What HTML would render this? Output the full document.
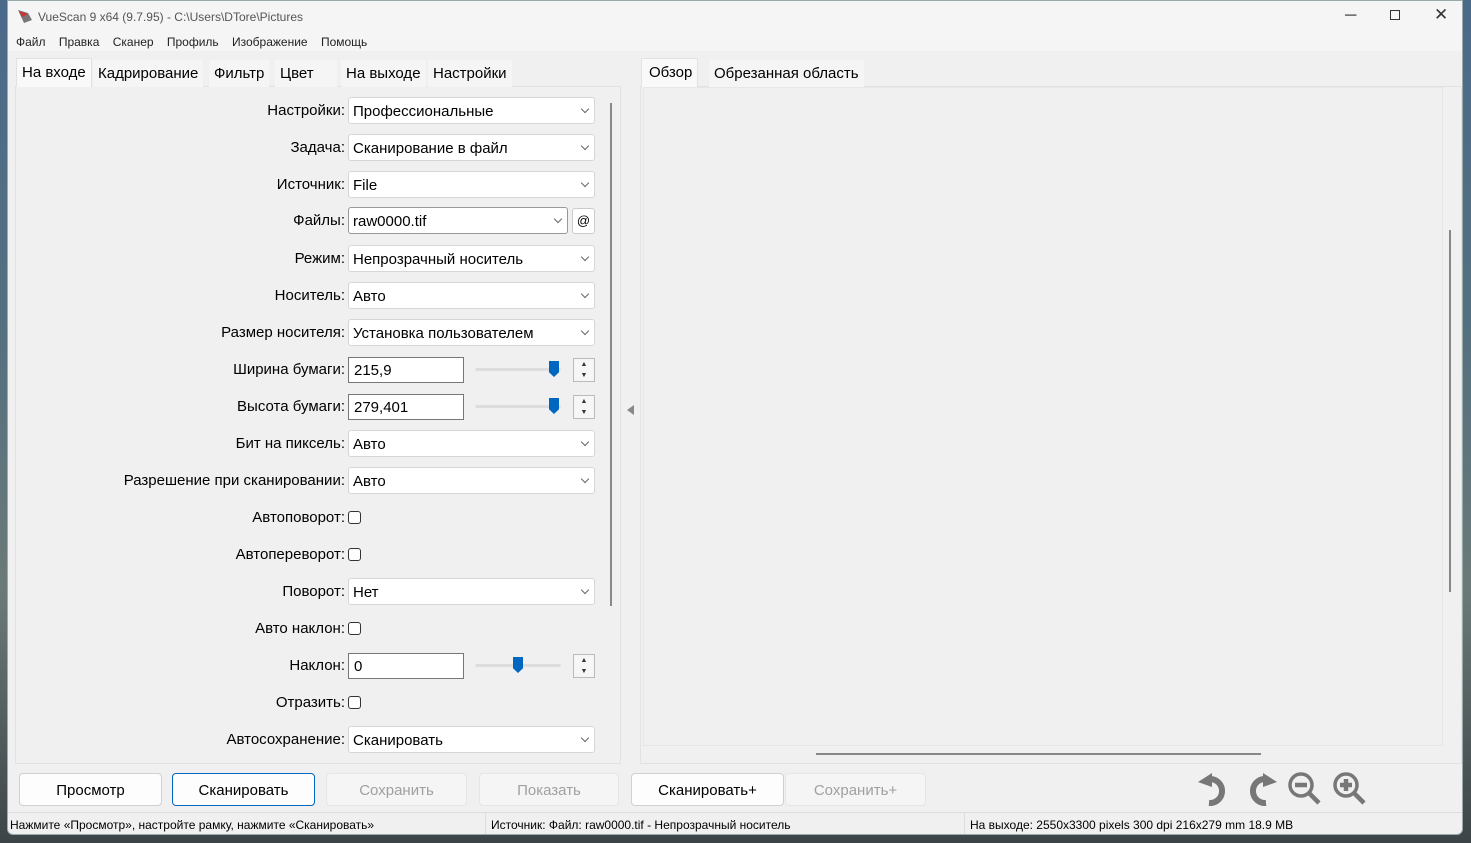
<!DOCTYPE html>
<html><head><meta charset="utf-8"><style>
*{box-sizing:border-box;margin:0;padding:0}
body{width:1471px;height:843px;overflow:hidden;background:linear-gradient(180deg,#4a6a8a 0%,#55707f 40%,#6b7a78 70%,#3d4448 100%);font-family:"Liberation Sans",sans-serif;position:relative;color:#000}
.a{position:absolute}
#win{left:7px;top:0;width:1456px;height:835px;background:#f0f0f0;border:1px solid #9aa;border-radius:0 0 6px 6px;overflow:hidden}
.lbl{position:absolute;font-size:15px;text-align:right;width:330px;left:15px}
.cb{position:absolute;left:348px;width:247px;height:27px;background:#fff;border:1px solid #d6d6d6;border-radius:3px;font-size:15px;padding:5px 0 0 4px}
.cb:after{content:"";position:absolute;right:6px;top:8px;width:5px;height:5px;border-right:1px solid #666;border-bottom:1px solid #666;transform:rotate(45deg)}
.tx{position:absolute;left:348px;width:116px;height:26px;background:#fff;border:1px solid #777;font-size:15px;padding:4px 0 0 5px}
.trk{position:absolute;left:475px;width:86px;height:3px;background:#ddd;border-radius:2px}
.th{position:absolute;width:10px;height:16px;background:#0067c0;clip-path:polygon(0 0,100% 0,100% 70%,50% 100%,0 70%)}
.sp{position:absolute;left:573px;width:22px;height:24px;border:1px solid #bbb;background:#f6f6f6;font-size:7px;text-align:center;line-height:11px;color:#333}
.ck{position:absolute;left:348px;width:13px;height:13px;border:1px solid #333;border-radius:3px;background:#fff}
.btn{position:absolute;top:773px;height:33px;background:#fdfdfd;border:1px solid #d0d0d0;border-radius:4px;font-size:15px;text-align:center;line-height:33px}
.dis{color:#a0a0a0;background:#f5f5f5;border-color:#e5e5e5}
.tab{position:absolute;top:60px;height:27px;font-size:15px;padding:5px 5px 0;background:#f5f5f5}
.st{position:absolute;top:818px;font-size:12px}
</style></head><body>
<div id="win" class="a">
<div class="a" style="left:0;top:0;width:1456px;height:50px;background:#f5f5f5"></div>
<svg class="a" style="left:8px;top:7px" width="18" height="16"><path d="M2 2 L12 5 L16 12 L8 15 Z" fill="#777"/><path d="M3 3 L12 6 L6 9Z" fill="#c33"/></svg>
<div class="a" style="left:30px;top:9px;font-size:12px;color:#555">VueScan 9 x64 (9.7.95) - C:\Users\DTore\Pictures</div>
<div class="a" style="left:1337px;top:6px;font-size:16px;color:#333">─</div>
<div class="a" style="left:1382px;top:9px;width:10px;height:10px;border:1px solid #333"></div>
<div class="a" style="left:1426px;top:4px;font-size:17px;color:#333">✕</div>
<div class="a" style="left:8px;top:34px;font-size:12px;color:#222;word-spacing:0">Файл&nbsp;&nbsp;&nbsp; Правка&nbsp;&nbsp;&nbsp; Сканер&nbsp;&nbsp;&nbsp; Профиль&nbsp;&nbsp;&nbsp; Изображение&nbsp;&nbsp;&nbsp; Помощь</div>
</div>
<div class="a" style="left:15px;top:86px;width:606px;height:678px;border:1px solid #e2e2e2;background:#f0f0f0"></div>
<div class="tab" style="left:16px;top:58px;height:29px;background:#f9f9f9;border:1px solid #e2e2e2;border-bottom:none">На входе</div>
<div class="tab" style="left:93px">Кадрирование</div>
<div class="tab" style="left:209px">Фильтр</div>
<div class="tab" style="left:275px;width:62px">Цвет</div>
<div class="tab" style="left:341px">На выходе</div>
<div class="tab" style="left:428px">Настройки</div>
<div class="a" style="left:610px;top:103px;width:2px;height:503px;background:#888"></div>

<div class="lbl" style="top:102px">Настройки:</div><div class="cb" style="top:97px">Профессиональные</div>
<div class="lbl" style="top:139px">Задача:</div><div class="cb" style="top:134px">Сканирование в файл</div>
<div class="lbl" style="top:176px">Источник:</div><div class="cb" style="top:171px">File</div>
<div class="lbl" style="top:212px">Файлы:</div><div class="cb" style="top:207px;width:220px;border-color:#999">raw0000.tif</div>
<div class="a" style="left:572px;top:208px;width:23px;height:26px;background:#fff;border:1px solid #ccc;border-radius:3px;font-size:13px;text-align:center;line-height:24px">@</div>
<div class="lbl" style="top:250px">Режим:</div><div class="cb" style="top:245px">Непрозрачный носитель</div>
<div class="lbl" style="top:287px">Носитель:</div><div class="cb" style="top:282px">Авто</div>
<div class="lbl" style="top:324px">Размер носителя:</div><div class="cb" style="top:319px">Установка пользователем</div>
<div class="lbl" style="top:361px">Ширина бумаги:</div><div class="tx" style="top:357px">215,9</div>
<div class="trk" style="top:368px"></div><div class="th" style="left:549px;top:361px"></div>
<div class="sp" style="top:358px">▲<br>▼</div>
<div class="lbl" style="top:398px">Высота бумаги:</div><div class="tx" style="top:394px">279,401</div>
<div class="trk" style="top:405px"></div><div class="th" style="left:549px;top:398px"></div>
<div class="sp" style="top:395px">▲<br>▼</div>
<div class="lbl" style="top:435px">Бит на пиксель:</div><div class="cb" style="top:430px">Авто</div>
<div class="lbl" style="top:472px">Разрешение при сканировании:</div><div class="cb" style="top:467px">Авто</div>
<div class="lbl" style="top:509px">Автоповорот:</div><div class="ck" style="top:511px"></div>
<div class="lbl" style="top:546px">Автопереворот:</div><div class="ck" style="top:548px"></div>
<div class="lbl" style="top:583px">Поворот:</div><div class="cb" style="top:578px">Нет</div>
<div class="lbl" style="top:620px">Авто наклон:</div><div class="ck" style="top:622px"></div>
<div class="lbl" style="top:657px">Наклон:</div><div class="tx" style="top:653px">0</div>
<div class="trk" style="top:664px"></div><div class="th" style="left:513px;top:657px"></div>
<div class="sp" style="top:654px">▲<br>▼</div>
<div class="lbl" style="top:694px">Отразить:</div><div class="ck" style="top:696px"></div>
<div class="lbl" style="top:731px">Автосохранение:</div><div class="cb" style="top:726px">Сканировать</div>

<div class="a" style="left:627px;top:405px;width:0;height:0;border-top:5px solid transparent;border-bottom:5px solid transparent;border-right:7px solid #888"></div>
<div class="a" style="left:640px;top:86px;width:822px;height:678px;border:1px solid #e2e2e2;background:#f0f0f0"></div>
<div class="tab" style="left:641px;top:58px;height:29px;background:#f9f9f9;border:1px solid #e2e2e2;border-bottom:none;padding-left:7px">Обзор</div>
<div class="tab" style="left:709px">Обрезанная область</div>
<div class="a" style="left:643px;top:87px;width:800px;height:659px;border:1px solid #e6e6e6;background:#f0f0f0"></div>
<div class="a" style="left:1449px;top:230px;width:2px;height:362px;background:#888"></div>
<div class="a" style="left:816px;top:753px;width:445px;height:2px;background:#888"></div>

<div class="btn" style="left:19px;width:143px">Просмотр</div>
<div class="btn" style="left:172px;width:143px;border-color:#0067c0">Сканировать</div>
<div class="btn dis" style="left:326px;width:141px">Сохранить</div>
<div class="btn dis" style="left:479px;width:140px">Показать</div>
<div class="btn" style="left:631px;width:153px">Сканировать+</div>
<div class="btn dis" style="left:785px;width:141px">Сохранить+</div>
<svg class="a" style="left:1195px;top:770px" width="180" height="42" fill="none" stroke="#777">
<path d="M16 9 A12 12 0 1 1 14 33" stroke-width="6"/><path d="M3 12 L17 3 L17 17Z" fill="#777" stroke="none"/>
<path d="M69 9 A12 12 0 1 0 71 33" stroke-width="6"/><path d="M82 12 L68 3 L68 17Z" fill="#777" stroke="none"/>
<circle cx="106" cy="15" r="11" stroke-width="3.5"/><path d="M100 15h12M114 23l10 10" stroke-width="4.5"/>
<circle cx="151" cy="15" r="11" stroke-width="3.5"/><path d="M145 15h12M151 9v12M159 23l10 10" stroke-width="4.5"/>
</svg>
<div class="a" style="left:8px;top:812px;width:1454px;height:1px;background:#ddd"></div>
<div class="a" style="left:485px;top:813px;width:1px;height:21px;background:#ddd"></div>
<div class="a" style="left:964px;top:813px;width:1px;height:21px;background:#ddd"></div>
<div class="st" style="left:10px">Нажмите «Просмотр», настройте рамку, нажмите «Сканировать»</div>
<div class="st" style="left:491px">Источник: Файл: raw0000.tif - Непрозрачный носитель</div>
<div class="st" style="left:970px">На выходе: 2550x3300 pixels 300 dpi 216x279 mm 18.9 MB</div>
</body></html>
